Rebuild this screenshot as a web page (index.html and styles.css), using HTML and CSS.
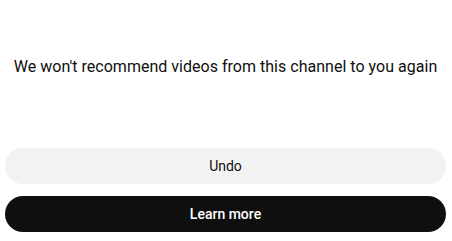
FILE: index.html
```html
<!DOCTYPE html>
<html>
<head>
  <title>Channel hidden</title>
  <link rel="stylesheet" href="styles.css">
</head>
<body>
  <main class="notice">
    <div class="message">
      <p>We won't recommend videos from this channel to you again</p>
    </div>
    <div class="actions">
      <button type="button" class="btn btn-undo">Undo</button>
      <button type="button" class="btn btn-learn">Learn more</button>
    </div>
  </main>
</body>
</html>
```

FILE: styles.css
```css
/* Reset default margin and padding */
body, p {
  margin: 0;
  padding: 0;
}

body {
  background-color: #fff;
  font-family: Roboto, Arial, sans-serif;
  color: #0f0f0f;
}

.notice {
  display: flex;
  flex-direction: column;
  height: 241px;
  padding: 0 6px 0 5px;
  box-sizing: border-box;
}

.message {
  height: 148px;
  padding-top: 56px;
  box-sizing: border-box;
  text-align: center;
}

.message p {
  font-size: 16px;
  line-height: 22px;
  letter-spacing: 0.02px;
}

.actions {
  display: flex;
  flex-direction: column;
  gap: 12px;
}

.btn {
  height: 36px;
  width: 100%;
  padding: 0 0 1px;
  border: none;
  border-radius: 18px;
  font-family: Roboto, Arial, sans-serif;
  font-size: 14px;
  cursor: pointer;
}

.btn-undo {
  background-color: #f2f2f2;
  color: #0f0f0f;
  font-weight: 400;
}

.btn-learn {
  background-color: #0f0f0f;
  color: #fff;
  font-weight: 500;
}
```
